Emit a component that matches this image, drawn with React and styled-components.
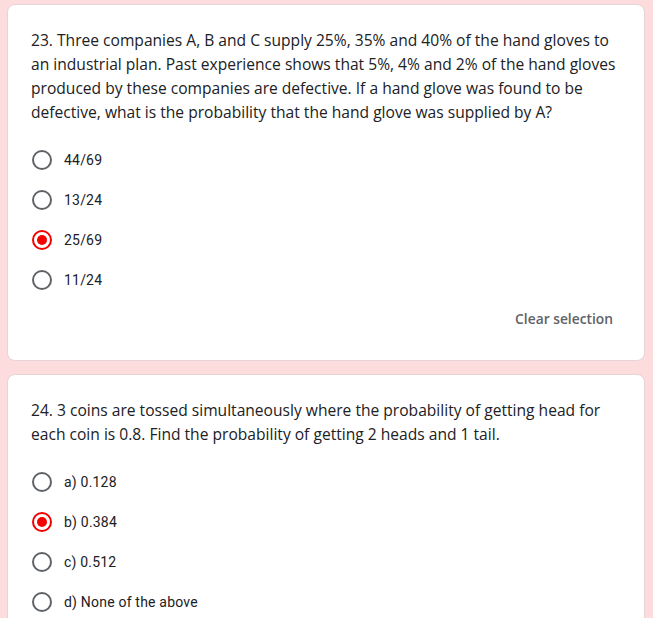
import React from "react";
import styled, { createGlobalStyle } from "styled-components";

const Global = createGlobalStyle`
  html, body { margin: 0; padding: 0; background: #fddcdd; }
  body { font-family: Roboto, "Liberation Sans", sans-serif; }
`;

const Page = styled.div`
  display: flex;
  flex-direction: column;
  gap: 13px;
  padding: 4px 8px 0 7px;
  background: #fddcdd;
  min-height: 618px;
  box-sizing: border-box;
`;

const Card = styled.section`
  background: #fff;
  border: 1px solid #e8d4d6;
  border-radius: 8px;
  padding: 23px 24px 24px 23px;
  display: flex;
  flex-direction: column;
`;

const Title = styled.div`
  font-family: "Open Sans", Roboto, sans-serif;
  font-size: 15.6px;
  line-height: 24px;
  color: #202124;
  margin-bottom: 16px;
`;

const Options = styled.div`
  display: flex;
  flex-direction: column;
`;

const Option = styled.label`
  display: flex;
  align-items: center;
  height: 40px;
  padding-left: 1px;
  gap: 12px;
  font-family: Roboto, "Liberation Sans", sans-serif;
  font-size: 14px;
  color: #202124;
  letter-spacing: 0.2px;
`;

const Radio = styled.span`
  width: 20px;
  height: 20px;
  box-sizing: border-box;
  border-radius: 50%;
  border: 2px solid ${(p) => (p.$on ? "#f40000" : "#5f6368")};
  display: flex;
  align-items: center;
  justify-content: center;
  flex: none;
  &::after {
    content: "";
    width: 10px;
    height: 10px;
    border-radius: 50%;
    background: #f40000;
    display: ${(p) => (p.$on ? "block" : "none")};
  }
`;

const Footer = styled.div`
  display: flex;
  justify-content: flex-end;
`;

const ClearButton = styled.button`
  border: none;
  background: none;
  font-family: "Open Sans", Roboto, sans-serif;
  font-size: 13.8px;
  font-weight: 600;
  color: #5f6368;
  padding: 8px 8px;
  margin-right: -1px;
  height: 36px;
  cursor: pointer;
`;

function Question({ lines, options, selected, clear }) {
  return (
    <Card>
      <Title>
        {lines.map((l, i) => (
          <React.Fragment key={i}>
            {l}
            {i < lines.length - 1 && <br />}
          </React.Fragment>
        ))}
      </Title>
      <Options>
        {options.map((o, i) => (
          <Option key={o}>
            <Radio $on={i === selected} />
            {o}
          </Option>
        ))}
      </Options>
      {clear && (
        <Footer>
          <ClearButton>Clear selection</ClearButton>
        </Footer>
      )}
    </Card>
  );
}

export default function App() {
  return (
    <>
      <Global />
      <Page>
        <Question
          lines={[
            "23. Three companies A, B and C supply 25%, 35% and 40% of the hand gloves to",
            "an industrial plan. Past experience shows that 5%, 4% and 2% of the hand gloves",
            "produced by these companies are defective. If a hand glove was found to be",
            "defective, what is the probability that the hand glove was supplied by A?",
          ]}
          options={["44/69", "13/24", "25/69", "11/24"]}
          selected={2}
          clear
        />
        <Question
          lines={[
            "24. 3 coins are tossed simultaneously where the probability of getting head for",
            "each coin is 0.8. Find the probability of getting 2 heads and 1 tail.",
          ]}
          options={["a) 0.128", "b) 0.384", "c) 0.512", "d) None of the above"]}
          selected={1}
        />
      </Page>
    </>
  );
}
